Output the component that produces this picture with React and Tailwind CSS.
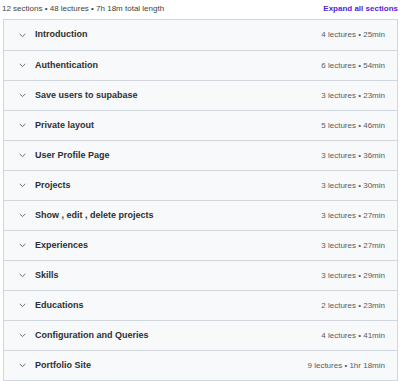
import React from "react";

const sections = [
  ["Introduction", "4 lectures • 25min"],
  ["Authentication", "6 lectures • 54min"],
  ["Save users to supabase", "3 lectures • 23min"],
  ["Private layout", "5 lectures • 46min"],
  ["User Profile Page", "3 lectures • 36min"],
  ["Projects", "3 lectures • 30min"],
  ["Show , edit , delete projects", "3 lectures • 27min"],
  ["Experiences", "3 lectures • 27min"],
  ["Skills", "3 lectures • 29min"],
  ["Educations", "2 lectures • 23min"],
  ["Configuration and Queries", "4 lectures • 41min"],
  ["Portfolio Site", "9 lectures • 1hr 18min"],
];

function Chevron() {
  return (
    <svg width="7" height="5" viewBox="0 0 7 5" fill="none" className="shrink-0">
      <path d="M1 1.2 L3.5 3.6 L6 1.2" stroke="#6a6f73" strokeWidth="1" strokeLinecap="round" strokeLinejoin="round" />
    </svg>
  );
}

export default function App() {
  return (
    <div className="w-[400px] h-[381px] bg-white overflow-hidden" style={{ fontFamily: "'Liberation Sans', Arial, sans-serif" }}>
      <div className="flex items-center justify-between h-[16px] px-[2px] pt-[2px]">
        <span className="text-[8px] text-[#3e4143]">12 sections • 48 lectures • 7h 18m total length</span>
        <span className="text-[8px] font-bold text-[#5624d0]">Expand all sections</span>
      </div>
      <div className="ml-[3px] mr-[2px] mt-[3px] border border-[#d1d7dc]">
        {sections.map(([title, meta], i) => (
          <div
            key={i}
            className={`flex items-center h-[30px] bg-[#f7f9fa] pl-[15px] pr-[12px] ${i > 0 ? "border-t border-[#d1d7dc]" : ""}`}
          >
            <Chevron />
            <span className="ml-[9px] text-[9px] font-bold text-[#2d2f31]">{title}</span>
            <span className="ml-auto text-[8px] text-[#595c5f]">{meta}</span>
          </div>
        ))}
      </div>
    </div>
  );
}
